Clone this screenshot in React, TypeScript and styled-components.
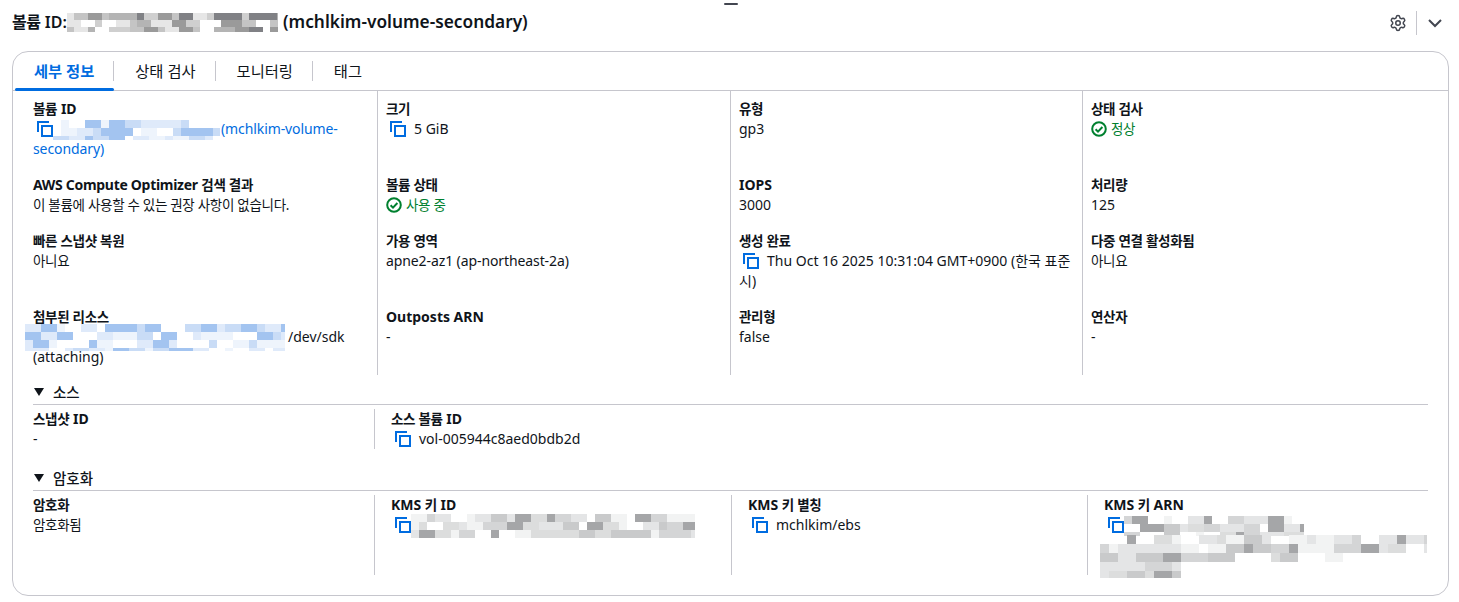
import React from "react";
import styled, { createGlobalStyle } from "styled-components";
import { Settings } from "lucide-react";

const GlobalStyle = createGlobalStyle`
  html, body {
    margin: 0;
    padding: 0;
    background: #fff;
    font-family: "Noto Sans", "Noto Sans CJK KR", sans-serif;
    color: #0f141a;
  }
`;

const GREYS = ["#ffffff", "#f2f3f3", "#e4e5e6", "#dcdddd", "#d4d5d6", "#c9cacb", "#a5a6a8"];
const DARK_GREYS = ["#ffffff", "#e6e6e6", "#cfcfcf", "#b4b4b4", "#9a9a9a", "#808185", "#c4c4c4"];
const BLUES = ["#ffffff", "#ffffff", "#eef4fc", "#dfeafa", "#c9dcf6", "#a3c4f0", "#dfeafa"];

interface MosaicProps {
  w: number;
  h: number;
  cell?: number;
  colors: string[];
  seed?: number;
  className?: string;
  // per row: how far the cells reach, for a block that ends in a short line
  reach?: (row: number) => number;
}

const Mosaic = ({ w, h, cell = 9, colors, seed = 7, reach, className }: MosaicProps) => {
  const rects = [];
  const cols = Math.ceil(w / cell);
  const rows = Math.ceil(h / cell);
  let s = seed * 9301 + 49297;
  let prev = colors[0];
  for (let y = 0; y < rows; y++) {
    for (let x = 0; x < cols; x++) {
      s = (s * 9301 + 49297) % 233280;
      if (reach && x * cell > reach(y)) continue;
      // runs of one colour, the way a pixelated line of text looks
      const c = s % 5 < 2 ? prev : colors[Math.floor((s / 233280) * colors.length)];
      prev = c;
      if (c === "#ffffff") continue;
      rects.push(<rect key={`${x}-${y}`} x={x * cell} y={y * cell} width={cell} height={cell} fill={c} />);
    }
  }
  return (
    <MosaicSvg className={className} width={w} height={h} viewBox={`0 0 ${w} ${h}`} shapeRendering="crispEdges">
      {rects}
    </MosaicSvg>
  );
};

const CopyIcon = () => (
  <CopySvg width="16" height="16" viewBox="0 0 16 16" fill="none" stroke="#006ce0" strokeWidth="2">
    <rect x="5" y="5" width="10" height="10" />
    <path d="M1 11V1h11" />
  </CopySvg>
);

const StatusOk = ({ children }: { children: React.ReactNode }) => (
  <Ok>
    <svg width="16" height="16" viewBox="0 0 16 16" fill="none" stroke="#00802f" strokeWidth="2">
      <circle cx="8" cy="8" r="6.8" />
      <path d="M4.6 8.2l2.4 2.4 4.4-4.6" />
    </svg>
    <Ko>{children}</Ko>
  </Ok>
);

const App = () => {
  return (
    <>
      <GlobalStyle />
      <Page>
        <Handle />
        <Header>
          <Title>
            <TitleIdLabel><TitleKo>볼륨</TitleKo> ID:</TitleIdLabel>
            <Mosaic w={211} h={19} cell={7} colors={DARK_GREYS} seed={3} />
            <TitleName>(mchlkim-volume-secondary)</TitleName>
          </Title>
          <Actions>
            <GearIcon size={18} color="#424650" strokeWidth={2} />
            <ActionDivider />
            <svg width="16" height="16" viewBox="0 0 16 16" fill="none" stroke="#424650" strokeWidth="2">
              <path d="M2 5l6 6 6-6" />
            </svg>
          </Actions>
        </Header>

        <Card>
          <Tabs>
            <Tab $active>세부 정보</Tab>
            <Tab>상태 검사</Tab>
            <Tab>모니터링</Tab>
            <Tab $last>태그</Tab>
          </Tabs>

          <MainGrid>
            <Cell>
              <Label><Ko>볼륨</Ko> ID</Label>
              <LinkValue>
                <CopyIcon />
                <IdMosaic w={167} h={20} cell={8} colors={BLUES} seed={11} />
                (mchlkim-volume-secondary)
              </LinkValue>
            </Cell>
            <Cell>
              <Label><Ko>크기</Ko></Label>
              <Value><CopyIcon />5 GiB</Value>
            </Cell>
            <Cell>
              <Label><Ko>유형</Ko></Label>
              <Value>gp3</Value>
            </Cell>
            <Cell $last>
              <Label><Ko>상태 검사</Ko></Label>
              <StatusOk>정상</StatusOk>
            </Cell>

            <Cell>
              <Label><TightLatin>AWS Compute Optimizer</TightLatin> <Ko>검색 결과</Ko></Label>
              <Value><Ko>이 볼륨에 사용할 수 있는 권장 사항이 없습니다.</Ko></Value>
            </Cell>
            <Cell>
              <Label><Ko>볼륨 상태</Ko></Label>
              <StatusOk>사용 중</StatusOk>
            </Cell>
            <Cell>
              <Label>IOPS</Label>
              <Value>3000</Value>
            </Cell>
            <Cell $last>
              <Label><Ko>처리량</Ko></Label>
              <Value>125</Value>
            </Cell>

            <Cell>
              <Label><Ko>빠른 스냅샷 복원</Ko></Label>
              <Value><Ko>아니요</Ko></Value>
            </Cell>
            <Cell>
              <Label><Ko>가용 영역</Ko></Label>
              <ZoneValue>apne2-az1 (ap-northeast-2a)</ZoneValue>
            </Cell>
            <Cell>
              <Label><Ko>생성 완료</Ko></Label>
              <Value><CopyIcon />Thu Oct 16 2025 10:31:04 GMT+0900 (한국 표준시)</Value>
            </Cell>
            <Cell $last>
              <Label><Ko>다중 연결 활성화됨</Ko></Label>
              <Value><Ko>아니요</Ko></Value>
            </Cell>

            <Cell>
              <Label><Ko>첨부된 리소스</Ko></Label>
              <Value>
                <AttachedMosaic w={260} h={27} cell={8} colors={BLUES} seed={5} />
                /dev/sdk (attaching)
              </Value>
            </Cell>
            <Cell>
              <Label>Outposts ARN</Label>
              <Value>-</Value>
            </Cell>
            <Cell>
              <Label><Ko>관리형</Ko></Label>
              <Value>false</Value>
            </Cell>
            <Cell $last>
              <Label><Ko>연산자</Ko></Label>
              <Value>-</Value>
            </Cell>
          </MainGrid>

          <Section>
            <SectionTitle>
              <Caret />
              소스
            </SectionTitle>
            <SubGrid>
              <SubCell>
                <Label><Ko>스냅샷</Ko> ID</Label>
                <Value>-</Value>
              </SubCell>
              <SubCell>
                <Label><Ko>소스 볼륨</Ko> ID</Label>
                <Value><CopyIcon />vol-005944c8aed0bdb2d</Value>
              </SubCell>
            </SubGrid>
          </Section>

          <Section>
            <SectionTitle>
              <Caret />
              암호화
            </SectionTitle>
            <SubGrid $tall>
              <SubCell>
                <Label><Ko>암호화</Ko></Label>
                <Value><Ko>암호화됨</Ko></Value>
              </SubCell>
              <SubCell>
                <Label>KMS <Ko>키</Ko> ID</Label>
                <Value>
                  <CopyIcon />
                  <IdMosaic w={284} h={24} cell={8} colors={GREYS} seed={9} />
                </Value>
              </SubCell>
              <SubCell>
                <Label>KMS <Ko>키 별칭</Ko></Label>
                <Value><CopyIcon />mchlkim/ebs</Value>
              </SubCell>
              <SubCell>
                <Label>KMS <Ko>키</Ko> ARN</Label>
                <Value>
                  <CopyIcon />
                  <IdMosaic w={180} h={20} cell={8} colors={GREYS} seed={13} />
                  <ArnRest>
                    <Mosaic
                      w={327}
                      h={43}
                      cell={9}
                      colors={GREYS}
                      seed={17}
                      reach={(row) => (row >= 3 ? 80 : row === 2 ? 240 : 327)}
                    />
                  </ArnRest>
                </Value>
              </SubCell>
            </SubGrid>
          </Section>
        </Card>
      </Page>
    </>
  );
};

export default App;

const Page = styled.div`
  width: 1459px;
  height: 602px;
  box-sizing: border-box;
  padding: 0 10px 0 12px;
  overflow: hidden;
  position: relative;
  font-size: 14px;
  line-height: 20px;
`;

const Handle = styled.div`
  position: absolute;
  left: 724px;
  top: 3px;
  width: 14px;
  height: 2px;
  border-radius: 1px;
  background: #424650;
`;

const Header = styled.div`
  height: 51px;
  box-sizing: border-box;
  padding-top: 9px;
  display: flex;
  justify-content: space-between;
  align-items: flex-start;
`;

const Title = styled.h2`
  margin: 0;
  display: flex;
  align-items: center;
  gap: 4px;
  font-size: 16px;
  line-height: 26px;
  font-weight: 600;
  color: #0f141a;
  white-space: nowrap;
`;

const TitleIdLabel = styled.span`
  width: 51px;
`;

const TitleKo = styled.span`
  letter-spacing: -0.4px;
`;

const TitleName = styled.span`
  margin-left: 1px;
  font-size: 17.3px;
`;

const GearIcon = styled(Settings)`
  margin: 0 -1px 0 1px;
`;

const MosaicSvg = styled.svg`
  display: inline-block;
  vertical-align: middle;
  flex: none;
`;

const IdMosaic = styled(Mosaic)`
  margin: -4px 1px -4px -8px;
  vertical-align: middle;
`;

const AttachedMosaic = styled(Mosaic)`
  margin: -7px 3px -5px -8px;
  vertical-align: middle;
`;

const Actions = styled.div`
  display: flex;
  align-items: center;
  gap: 10px;
  padding-right: 6px;
  height: 26px;
  margin-top: 1px;
`;

const ActionDivider = styled.div`
  width: 1px;
  height: 24px;
  background: #c6c6cd;
`;

const Card = styled.div`
  box-sizing: border-box;
  width: 1437px;
  height: 545px;
  border: 1px solid #c6c6cd;
  border-radius: 16px;
`;

const Tabs = styled.div`
  display: flex;
  height: 38px;
  border-bottom: 1px solid #c6c6cd;
  padding-left: 2px;
`;

const Tab = styled.div<{ $active?: boolean; $last?: boolean }>`
  position: relative;
  display: flex;
  align-items: center;
  padding: 0 20px 0 ${(p) => (p.$active ? 19 : 21)}px;
  font-size: 15.3px;
  font-weight: ${(p) => (p.$active ? 700 : 400)};
  color: ${(p) => (p.$active ? "#006ce0" : "#0f141a")};

  &::after {
    content: "";
    display: ${(p) => (p.$last ? "none" : "block")};
    position: absolute;
    right: 0;
    top: 9px;
    height: 20px;
    width: 1px;
    background: #c6c6cd;
  }

  &::before {
    content: "";
    display: ${(p) => (p.$active ? "block" : "none")};
    position: absolute;
    left: 0;
    right: 0;
    bottom: -1px;
    height: 3px;
    border-radius: 2px;
    background: #006ce0;
  }
`;

const MainGrid = styled.div`
  display: grid;
  grid-template-columns: 354px 353px 352px 353px;
  padding-left: 11px;
`;

const Cell = styled.div<{ $last?: boolean }>`
  box-sizing: border-box;
  padding: 8px 10px 8px 8px;
  border-right: ${(p) => (p.$last ? "none" : "1px solid #c6c6cd")};

  &:nth-child(4n + 1) {
    padding-left: 9px;
  }
`;

const Ko = styled.span`
  font-size: 13.5px;
  letter-spacing: -0.3px;
`;

const TightLatin = styled.span`
  letter-spacing: -0.3px;
`;

const Label = styled.div`
  font-weight: 700;
  font-size: 14px;
  line-height: 20px;
  color: #0f141a;
  height: 20px;
`;

const Value = styled.div`
  font-size: 14px;
  line-height: 20px;
  color: #0f141a;
`;

const ZoneValue = styled(Value)`
  letter-spacing: -0.1px;
`;

const LinkValue = styled(Value)`
  color: #006ce0;
  letter-spacing: -0.1px;
`;

const CopySvg = styled.svg`
  vertical-align: -3px;
  margin: 0 8px 0 4px;
`;

const Ok = styled.div`
  display: flex;
  align-items: center;
  gap: 4px;
  color: #00802f;
  font-size: 14px;
  line-height: 20px;
`;

const Section = styled.div`
  margin: 6px 20px 0 20px;

  & + & {
    margin-top: 18px;
  }
`;

const SectionTitle = styled.div`
  display: flex;
  align-items: center;
  gap: 9px;
  height: 24px;
  padding-bottom: 2px;
  font-size: 14.5px;
  line-height: 20px;
  font-weight: 500;
  border-bottom: 1px solid #c6c6cd;
  box-sizing: border-box;
`;

const Caret = styled.span`
  margin-left: 1px;
  width: 0;
  height: 0;
  border-left: 5.5px solid transparent;
  border-right: 5.5px solid transparent;
  border-top: 8px solid #0f141a;
`;

const SubGrid = styled.div<{ $tall?: boolean }>`
  display: grid;
  grid-template-columns: 341px 357px 356px 340px;
  grid-template-rows: ${(p) => (p.$tall ? "80px" : "40px")};
  margin-top: 4px;
`;

const SubCell = styled.div`
  box-sizing: border-box;
  padding-left: 16px;
  border-left: 1px solid #c6c6cd;

  &:first-child {
    padding-left: 0;
    border-left: none;
  }
`;

const ArnRest = styled.div`
  margin-left: -4px;
  line-height: 0;
`;
